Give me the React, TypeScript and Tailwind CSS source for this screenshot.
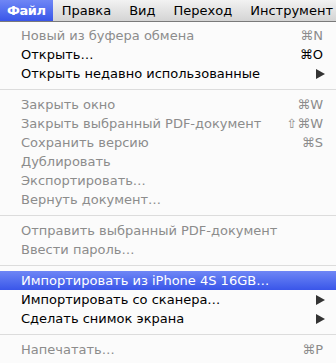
import React from "react";

type Item =
  | { sep: true }
  | { label: string; key?: string; disabled?: boolean; sub?: boolean; active?: boolean };

const items: Item[] = [
  { label: "Новый из буфера обмена", key: "⌘N", disabled: true },
  { label: "Открыть…", key: "⌘O" },
  { label: "Открыть недавно использованные", sub: true },
  { sep: true },
  { label: "Закрыть окно", key: "⌘W", disabled: true },
  { label: "Закрыть выбранный PDF-документ", key: "⇧⌘W", disabled: true },
  { label: "Сохранить версию", key: "⌘S", disabled: true },
  { label: "Дублировать", disabled: true },
  { label: "Экспортировать…", disabled: true },
  { label: "Вернуть документ…", disabled: true },
  { sep: true },
  { label: "Отправить выбранный PDF-документ", disabled: true },
  { label: "Ввести пароль…", disabled: true },
  { sep: true },
  { label: "Импортировать из iPhone 4S 16GB…", active: true },
  { label: "Импортировать со сканера…", sub: true },
  { label: "Сделать снимок экрана", sub: true },
  { sep: true },
  { label: "Напечатать…", key: "⌘P", disabled: true },
];

const bar = ["Правка", "Вид", "Переход", "Инструмент"];

export default function App() {
  return (
    <div className="w-[336px] h-[363px] overflow-hidden bg-[#fbfbfb] font-['DejaVu_Sans',sans-serif] text-[13px]">
      {/* Menu bar */}
      <div className="flex h-[22px] border-b border-[#7a7a7a] bg-gradient-to-b from-[#f2f2f2] to-[#d4d4d4] text-[13px] text-black">
        <div className="flex h-full items-center px-[7px] bg-gradient-to-b from-[#6f86f5] to-[#3a55e9] font-bold tracking-[-0.4px] text-white">
          Файл
        </div>
        {bar.map((b) => (
          <div key={b} className="flex h-full items-center px-[9px] whitespace-nowrap">
            {b}
          </div>
        ))}
      </div>

      {/* Dropdown */}
      <div className="pt-[4px]">
        {items.map((it, i) =>
          "sep" in it ? (
            <div key={i} className="h-[12px] flex items-center">
              <div className="h-px w-full bg-[#dcdcdc]" />
            </div>
          ) : (
            <div
              key={i}
              className={`flex h-[19px] items-center pl-[21px] pr-[13px] whitespace-nowrap ${
                it.active
                  ? "bg-gradient-to-b from-[#6f86f5] to-[#3a55e9] text-white"
                  : it.disabled
                  ? "text-[#8c8c8c]"
                  : "text-black"
              }`}
            >
              <span className="flex-1">{it.label}</span>
              {it.key && <span>{it.key}</span>}
              {it.sub && (
                <svg width="9" height="10" viewBox="0 0 9 10" className="mr-[-2px]">
                  <path d="M0 0 L9 5 L0 10 Z" fill="#333" />
                </svg>
              )}
            </div>
          )
        )}
      </div>
    </div>
  );
}
